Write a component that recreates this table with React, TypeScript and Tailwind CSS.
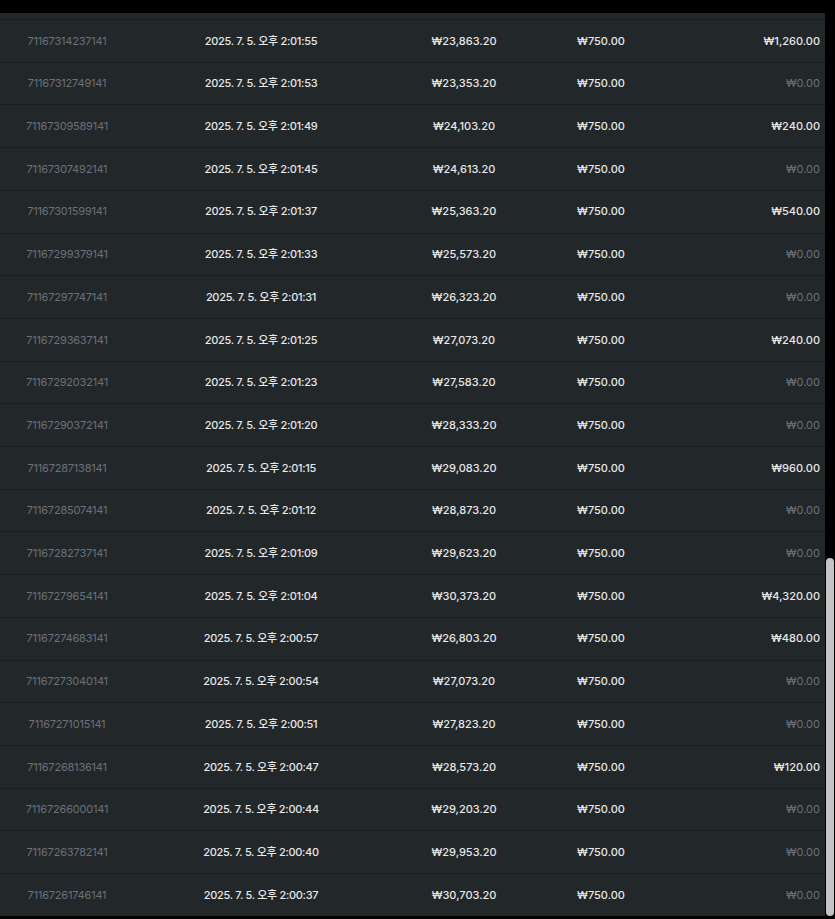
const rows: [string, string, string, string][] = [
  ['7116731423714', '2025. 7. 5. 오후 2:01:55', '₩23,863.20', '₩1,260.00'],
  ['7116731274914', '2025. 7. 5. 오후 2:01:53', '₩23,353.20', '₩0.00'],
  ['7116730958914', '2025. 7. 5. 오후 2:01:49', '₩24,103.20', '₩240.00'],
  ['7116730749214', '2025. 7. 5. 오후 2:01:45', '₩24,613.20', '₩0.00'],
  ['7116730159914', '2025. 7. 5. 오후 2:01:37', '₩25,363.20', '₩540.00'],
  ['7116729937914', '2025. 7. 5. 오후 2:01:33', '₩25,573.20', '₩0.00'],
  ['7116729774714', '2025. 7. 5. 오후 2:01:31', '₩26,323.20', '₩0.00'],
  ['7116729363714', '2025. 7. 5. 오후 2:01:25', '₩27,073.20', '₩240.00'],
  ['7116729203214', '2025. 7. 5. 오후 2:01:23', '₩27,583.20', '₩0.00'],
  ['7116729037214', '2025. 7. 5. 오후 2:01:20', '₩28,333.20', '₩0.00'],
  ['7116728713814', '2025. 7. 5. 오후 2:01:15', '₩29,083.20', '₩960.00'],
  ['7116728507414', '2025. 7. 5. 오후 2:01:12', '₩28,873.20', '₩0.00'],
  ['7116728273714', '2025. 7. 5. 오후 2:01:09', '₩29,623.20', '₩0.00'],
  ['7116727965414', '2025. 7. 5. 오후 2:01:04', '₩30,373.20', '₩4,320.00'],
  ['7116727468314', '2025. 7. 5. 오후 2:00:57', '₩26,803.20', '₩480.00'],
  ['7116727304014', '2025. 7. 5. 오후 2:00:54', '₩27,073.20', '₩0.00'],
  ['7116727101514', '2025. 7. 5. 오후 2:00:51', '₩27,823.20', '₩0.00'],
  ['7116726813614', '2025. 7. 5. 오후 2:00:47', '₩28,573.20', '₩120.00'],
  ['7116726600014', '2025. 7. 5. 오후 2:00:44', '₩29,203.20', '₩0.00'],
  ['7116726378214', '2025. 7. 5. 오후 2:00:40', '₩29,953.20', '₩0.00'],
  ['7116726174614', '2025. 7. 5. 오후 2:00:37', '₩30,703.20', '₩0.00'],
];

export default function App() {
  return (
    <div className="flex h-[919px] w-[835px] bg-black font-['Inter','Noto_Sans_CJK_KR',sans-serif] text-[11px]">
      <div className="mt-[13px] h-[903px] w-[825px] bg-[#22272a] pt-[6px]">
        {rows.map(([id, date, balance, win]) => (
          <div
            key={id}
            className="grid h-[42.71px] grid-cols-[134px_254px_152px_122px_1fr] items-center border-t border-[#1b1f22]"
          >
            <div className="text-center tracking-[-0.2px] text-[#6b7177]">{id + '1'}</div>
            <div className="text-center font-medium tracking-[-0.3px] text-[#e8e8e8]">{date}</div>
            <div className="text-center font-medium text-[#e8e8e8]">{balance}</div>
            <div className="text-center font-medium text-[#e8e8e8]">₩750.00</div>
            <div
              className={
                win === '₩0.00'
                  ? 'pr-[5px] text-right text-[#6b7177]'
                  : 'pr-[5px] text-right font-medium text-[#e8e8e8]'
              }
            >
              {win}
            </div>
          </div>
        ))}
      </div>
      <div className="flex w-[10px] flex-col">
        <div className="ml-[1px] mt-[558px] h-[358px] w-[8px] rounded-[4px] bg-[#c4c4c4]" />
      </div>
    </div>
  );
}
